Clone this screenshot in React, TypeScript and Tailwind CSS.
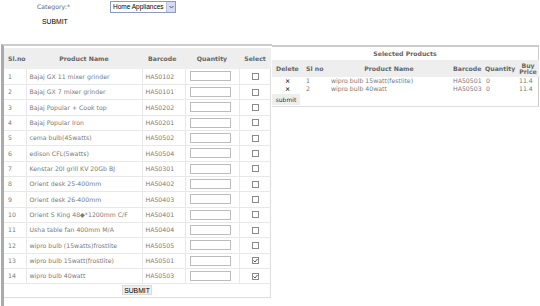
const products = [
  { no: 1, name: "Bajaj GX 11 mixer grinder", code: "HA50102", sel: false },
  { no: 2, name: "Bajaj GX 7 mixer grinder", code: "HA50101", sel: false },
  { no: 3, name: "Bajaj Popular + Cook top", code: "HA50202", sel: false },
  { no: 4, name: "Bajaj Popular Iron", code: "HA50201", sel: false },
  { no: 5, name: "cema bulb(45watts)", code: "HA50502", sel: false },
  { no: 6, name: "edison CFL(5watts)", code: "HA50504", sel: false },
  { no: 7, name: "Kenstar 20l grill KV 20Gb BJ", code: "HA50301", sel: false },
  { no: 8, name: "Orient desk 25-400mm", code: "HA50402", sel: false },
  { no: 9, name: "Orient desk 26-400mm", code: "HA50403", sel: false },
  { no: 10, name: "Orient S King 48\u25C6*1200mm C/F", code: "HA50401", sel: false },
  { no: 11, name: "Usha table fan 400mm M/A", code: "HA50404", sel: false },
  { no: 12, name: "wipro bulb (15watts)frostlite", code: "HA50505", sel: false },
  { no: 13, name: "wipro bulb 15watt(frostlite)", code: "HA50501", sel: true },
  { no: 14, name: "wipro bulb 40watt", code: "HA50503", sel: true },
];

const selected = [
  { no: 1, name: "wipro bulb 15watt(festlite)", code: "HA50501", qty: "0", price: "11.4" },
  { no: 2, name: "wipro bulb 40watt", code: "HA50503", qty: "0", price: "11.4" },
];

function Check({ on }: { on: boolean }) {
  return (
    <div className="w-[7px] h-[7px] border border-[#8a8a8a] bg-white flex items-center justify-center mx-auto">
      {on && (
        <svg width="5" height="5" viewBox="0 0 5 5">
          <path d="M0.5 2.5 L2 4 L4.5 1" stroke="#444" strokeWidth="0.9" fill="none" />
        </svg>
      )}
    </div>
  );
}

export default function App() {
  return (
    <div className="w-[540px] h-[306px] bg-white overflow-hidden text-[#7a7a7a] font-['DejaVu_Sans',sans-serif] text-[6.2px]">
      {/* category bar */}
      <div className="h-[44px]">
        <div className="flex items-center h-[14px] pl-[37px]">
          <span className="text-[#666] w-[73px]">Category:*</span>
          <div className="w-[66px] h-[12px] border border-[#8b9cb3] flex items-center bg-white">
            <span className="flex-1 pl-[2px] text-[6.5px] text-black whitespace-nowrap overflow-hidden font-['Liberation_Sans',sans-serif]">Home Appliances</span>
            <div className="w-[9px] h-[10px] bg-[#d6dcf0] border-l border-[#b8c0dc] flex items-center justify-center">
              <svg width="5" height="4" viewBox="0 0 5 4">
                <path d="M0.5 1 L2.5 3 L4.5 1" stroke="#4d5b9c" strokeWidth="1" fill="none" />
              </svg>
            </div>
          </div>
        </div>
        <div className="pl-[42px] pt-[3px] text-[6.8px] text-black font-['Liberation_Sans',sans-serif]">SUBMIT</div>
      </div>

      <div className="flex items-start">
        {/* left panel */}
        <div className="w-[271px] h-[266px] border-l-[3px] border-l-[#aaa] border-t-[2px] border-t-[#ccc] pt-[2px] ml-[1px]">
          <div className="w-[267px] border-r border-b border-[#ddd] pb-[2px]">
            <table className="w-full border-collapse table-fixed">
              <colgroup>
                <col className="w-[22px]" />
                <col className="w-[116px]" />
                <col className="w-[43px]" />
                <col className="w-[54px]" />
                <col className="w-[32px]" />
              </colgroup>
              <thead>
                <tr className="h-[21px] bg-[#eeeeee] text-[#666] font-bold">
                  <th className="text-left pl-[4px]">Sl.no</th>
                  <th className="text-center">Product Name</th>
                  <th className="text-left pl-[6px]">Barcode</th>
                  <th className="text-center">Quantity</th>
                  <th className="text-center">Select</th>
                </tr>
              </thead>
              <tbody>
                {products.map((p) => (
                  <tr key={p.no} className="h-[15.35px] border-b border-[#e8e8e8]">
                    <td className="pl-[4px] border-r border-[#e8e8e8]">{p.no}</td>
                    <td className="pl-[3px] border-r border-[#e8e8e8] whitespace-nowrap">{p.name}</td>
                    <td className="pl-[3px] border-r border-[#e8e8e8]">{p.code}</td>
                    <td className="border-r border-[#e8e8e8]">
                      <div className="w-[41px] h-[10px] border border-[#bcbcbc] bg-white ml-[4px]" />
                    </td>
                    <td>
                      <Check on={p.sel} />
                    </td>
                  </tr>
                ))}
              </tbody>
            </table>
            <div className="flex justify-center pt-[1px]">
              <div className="w-[30px] h-[10px] bg-[#eeeeee] border border-[#dcdcdc] text-black text-[6.8px] leading-[9px] text-center font-['Liberation_Sans',sans-serif]">SUBMIT</div>
            </div>
          </div>
        </div>

        {/* right panel */}
        <div className="w-[267px] mt-[1px] border-t-[2px] border-[#ccc] border-b border-r border-b-[#ddd]">
          <div className="h-[13px] flex items-center justify-center text-[#666] font-bold">Selected Products</div>
          <table className="w-full border-collapse table-fixed">
            <colgroup>
              <col className="w-[31px]" />
              <col className="w-[22px]" />
              <col className="w-[128px]" />
              <col className="w-[31px]" />
              <col className="w-[33px]" />
              <col className="w-[22px]" />
            </colgroup>
            <thead>
              <tr className="h-[17px] bg-[#eeeeee] text-[#666] font-bold">
                <th className="text-left pl-[4px]">Delete</th>
                <th className="text-left pl-[3px]">Sl no</th>
                <th className="text-center">Product Name</th>
                <th className="text-left">Barcode</th>
                <th className="text-left pl-[1px]">Quantity</th>
                <th className="text-center leading-[6px]">Buy<br />Price</th>
              </tr>
            </thead>
            <tbody>
              {selected.map((s) => (
                <tr key={s.no} className="h-[8px] leading-[8px]">
                  <td className="text-center text-[#333] font-bold">×</td>
                  <td className="pl-[3px]">{s.no}</td>
                  <td className="pl-[6px] whitespace-nowrap">{s.name}</td>
                  <td>{s.code}</td>
                  <td className="pl-[2px]">{s.qty}</td>
                  <td className="pl-[2px]">{s.price}</td>
                </tr>
              ))}
            </tbody>
          </table>
          <div className="pt-[1px] pb-[1px]">
            <div className="w-[28px] h-[11px] bg-[#eeeeee] text-[#333] text-[6px] leading-[11px] text-center">submit</div>
          </div>
        </div>
      </div>
    </div>
  );
}
